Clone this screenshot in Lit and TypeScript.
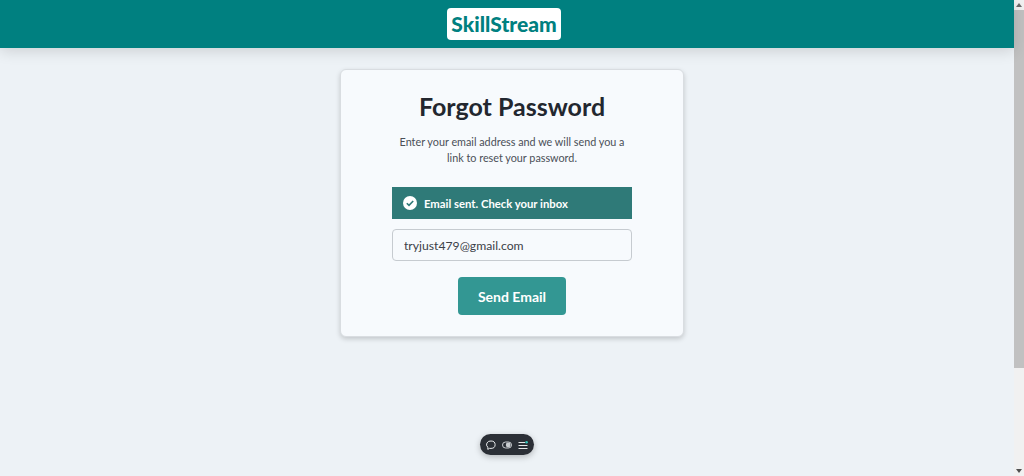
import { LitElement, html, css } from 'lit';
import { customElement } from 'lit/decorators.js';

@customElement('app-root')
export class AppRoot extends LitElement {
  static styles = css`
    :host {
      display: flex;
      height: 476px;
      overflow: hidden;
      background: #edf2f6;
      font-family: 'Lato', 'Noto Sans', sans-serif;
      color: #23272f;
    }
    .page {
      flex: 1;
      position: relative;
      display: flex;
      flex-direction: column;
      align-items: center;
      min-width: 0;
    }
    header {
      align-self: stretch;
      height: 48px;
      background: #008080;
      display: flex;
      justify-content: center;
      align-items: center;
      box-shadow: 0 3px 14px rgba(0, 0, 0, 0.14);
    }
    .logo {
      margin-right: 6px;
      background: #fff;
      color: #008080;
      font-weight: 900;
      font-size: 21px;
      line-height: 32px;
      height: 32px;
      width: 114px;
      text-align: center;
      border-radius: 4px;
    }
    .card {
      box-sizing: border-box;
      margin: 21px 0 0 10px;
      width: 344px;
      height: 268px;
      background: #f7fafd;
      border: 1px solid #d9dde1;
      border-radius: 6px;
      box-shadow: 0 2px 5px rgba(0, 0, 0, 0.18);
      padding: 0 51px;
      display: flex;
      flex-direction: column;
      align-items: center;
    }
    h1 {
      margin: 18px 0 0;
      font-size: 25px;
      line-height: 36px;
      font-weight: 700;
    }
    .desc {
      margin: 10px 0 0;
      width: 240px;
      text-align: center;
      font-size: 10.8px;
      line-height: 16px;
      color: #4a4f57;
    }
    .alert {
      align-self: stretch;
      margin-top: 21px;
      height: 32px;
      background: #2f7a78;
      color: #fff;
      display: flex;
      align-items: center;
      gap: 7px;
      padding: 0 11px;
      font-size: 11.3px;
      font-weight: 700;
    }
    .alert svg {
      width: 14px;
      height: 14px;
      flex: none;
    }
    .field {
      box-sizing: border-box;
      align-self: stretch;
      margin-top: 10px;
      height: 32px;
      border: 1px solid #c6cbd0;
      border-radius: 4px;
      padding: 0 11px;
      font: inherit;
      font-size: 12.2px;
      color: #3c4148;
      background: #f7fafd;
      outline: none;
    }
    .send {
      margin-top: 16px;
      width: 108px;
      height: 38px;
      border: 0;
      border-radius: 4px;
      background: #339793;
      color: #fff;
      font: inherit;
      font-size: 14px;
      font-weight: 700;
    }
    .widget {
      position: absolute;
      left: 480px;
      top: 434px;
      width: 54px;
      height: 21px;
      border-radius: 11px;
      background: #2b2f36;
      box-shadow: 0 2px 6px rgba(0, 0, 0, 0.25);
      display: flex;
      align-items: center;
      justify-content: center;
      gap: 6px;
    }
    .widget svg {
      width: 10px;
      height: 10px;
      flex: none;
    }
    .scrollbar {
      width: 10px;
      flex: none;
      background: #f1f1f1;
      display: flex;
      flex-direction: column;
      align-items: center;
    }
    .arrow {
      height: 10px;
      flex: none;
      display: flex;
      align-items: center;
      justify-content: center;
    }
    .arrow svg {
      width: 6px;
      height: 4px;
    }
    .thumb {
      align-self: stretch;
      height: 358px;
      background: #c1c1c1;
    }
    .spacer {
      flex: 1;
    }
  `;

  render() {
    return html`
      <div class="page">
        <header><div class="logo">SkillStream</div></header>
        <div class="card">
          <h1>Forgot Password</h1>
          <p class="desc">Enter your email address and we will send you a link to reset your password.</p>
          <div class="alert">
            <svg viewBox="0 0 14 14">
              <circle cx="7" cy="7" r="7" fill="#fff" />
              <path d="M3.8 7.2l2.2 2.2 4.2-4.4" fill="none" stroke="#2f7a78" stroke-width="1.6" />
            </svg>
            Email sent. Check your inbox
          </div>
          <input class="field" type="text" .value=${'tryjust479@gmail.com'} />
          <button class="send">Send Email</button>
        </div>
        <div class="widget">
          <svg viewBox="0 0 10 10" fill="none" stroke="#e6e8ea" stroke-width="1">
            <path d="M5 1a4 3.6 0 0 1 0 7.4H3.4L1.8 9.4V7.2A4 3.6 0 0 1 5 1z" />
          </svg>
          <svg viewBox="0 0 10 10">
            <rect x="0.5" y="2" width="9" height="6" rx="3" fill="none" stroke="#c9ccd0" stroke-width="1" />
            <circle cx="6.2" cy="5" r="2.4" fill="#c9ccd0" />
          </svg>
          <svg viewBox="0 0 10 10" stroke="#e6e8ea" stroke-width="1">
            <path d="M0.5 2.5h6.5M0.5 5.5h9M0.5 8.5h9" />
            <circle cx="8.6" cy="2.2" r="1.3" fill="#35c3b8" stroke="none" />
          </svg>
        </div>
      </div>
      <div class="scrollbar">
        <div class="arrow"><svg viewBox="0 0 6 4"><path d="M3 0l3 4H0z" fill="#6a6a6a" /></svg></div>
        <div class="thumb"></div>
        <div class="spacer"></div>
        <div class="arrow"><svg viewBox="0 0 6 4"><path d="M0 0h6L3 4z" fill="#505050" /></svg></div>
      </div>
    `;
  }
}
